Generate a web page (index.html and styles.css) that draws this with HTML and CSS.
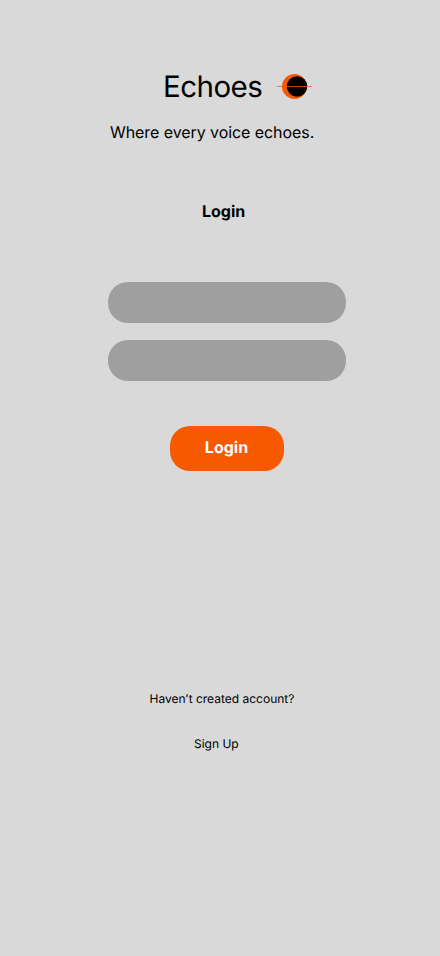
FILE: index.html
```html
<!DOCTYPE html>
<html lang="en">
<head>
<meta charset="utf-8">
<title>Echoes</title>
<link rel="stylesheet" href="styles.css">
</head>
<body>
<main class="screen">
  <header class="brand">
    <h1 class="name">Echoes</h1>
    <svg class="logo" width="36" height="26" viewBox="0 0 36 26" aria-hidden="true">
      <circle cx="17.5" cy="12.5" r="12.5" fill="#f75900"/>
      <circle cx="20" cy="12.5" r="10.25" fill="#000"/>
      <path d="M0 12.5H35" stroke="#f75900" stroke-width="0.75"/>
    </svg>
  </header>
  <p class="tagline">Where every voice echoes.</p>
  <h2 class="title">Login</h2>
  <form class="form">
    <input class="field" type="text" aria-label="Username">
    <input class="field" type="password" aria-label="Password">
    <button class="submit" type="button">Login</button>
  </form>
  <p class="hint">Haven’t created account?</p>
  <a class="signup">Sign Up</a>
</main>
</body>
</html>
```

FILE: styles.css
```css
* { box-sizing: border-box; }
body { margin: 0; background: #d9d9d9; color: #000; font-family: Inter, sans-serif; text-rendering: geometricPrecision; }
h1, h2, p { margin: 0; font-weight: 400; }
.screen { display: flex; flex-direction: column; align-items: flex-start; height: 956px; padding-top: 69px; }
.brand { display: flex; align-items: flex-start; height: 36px; margin-left: 163px; }
.name { width: 114px; font-size: 29.5px; line-height: 36px; letter-spacing: -0.55px; white-space: nowrap; }
.logo { display: block; flex: none; margin-top: 5px; }
.tagline { margin: 18px 0 0 110px; font-size: 16px; line-height: 19px; letter-spacing: -0.07px; white-space: nowrap; }
.title { margin: 60px 0 0 202px; font-size: 16px; line-height: 19px; font-weight: 700; }
.form { display: flex; flex-direction: column; align-items: center; gap: 17px; width: 238px; margin: 61px 0 0 108px; }
.field { width: 238px; height: 41px; padding: 0 20px; border: 0; border-radius: 20px; background: #9f9f9f; font: 16px Inter, sans-serif; }
.submit { width: 114px; height: 45px; margin-top: 28px; padding: 0 1px 3px 0; border: 0; border-radius: 20px; background: #f65900; color: #fff; font: 700 16px/19px Inter, sans-serif; text-rendering: geometricPrecision; }
.hint { margin: 220px 0 0 149.5px; font-size: 12px; line-height: 15px; }
.signup { margin: 30px 0 0 194px; font-size: 12px; line-height: 15px; }
```
